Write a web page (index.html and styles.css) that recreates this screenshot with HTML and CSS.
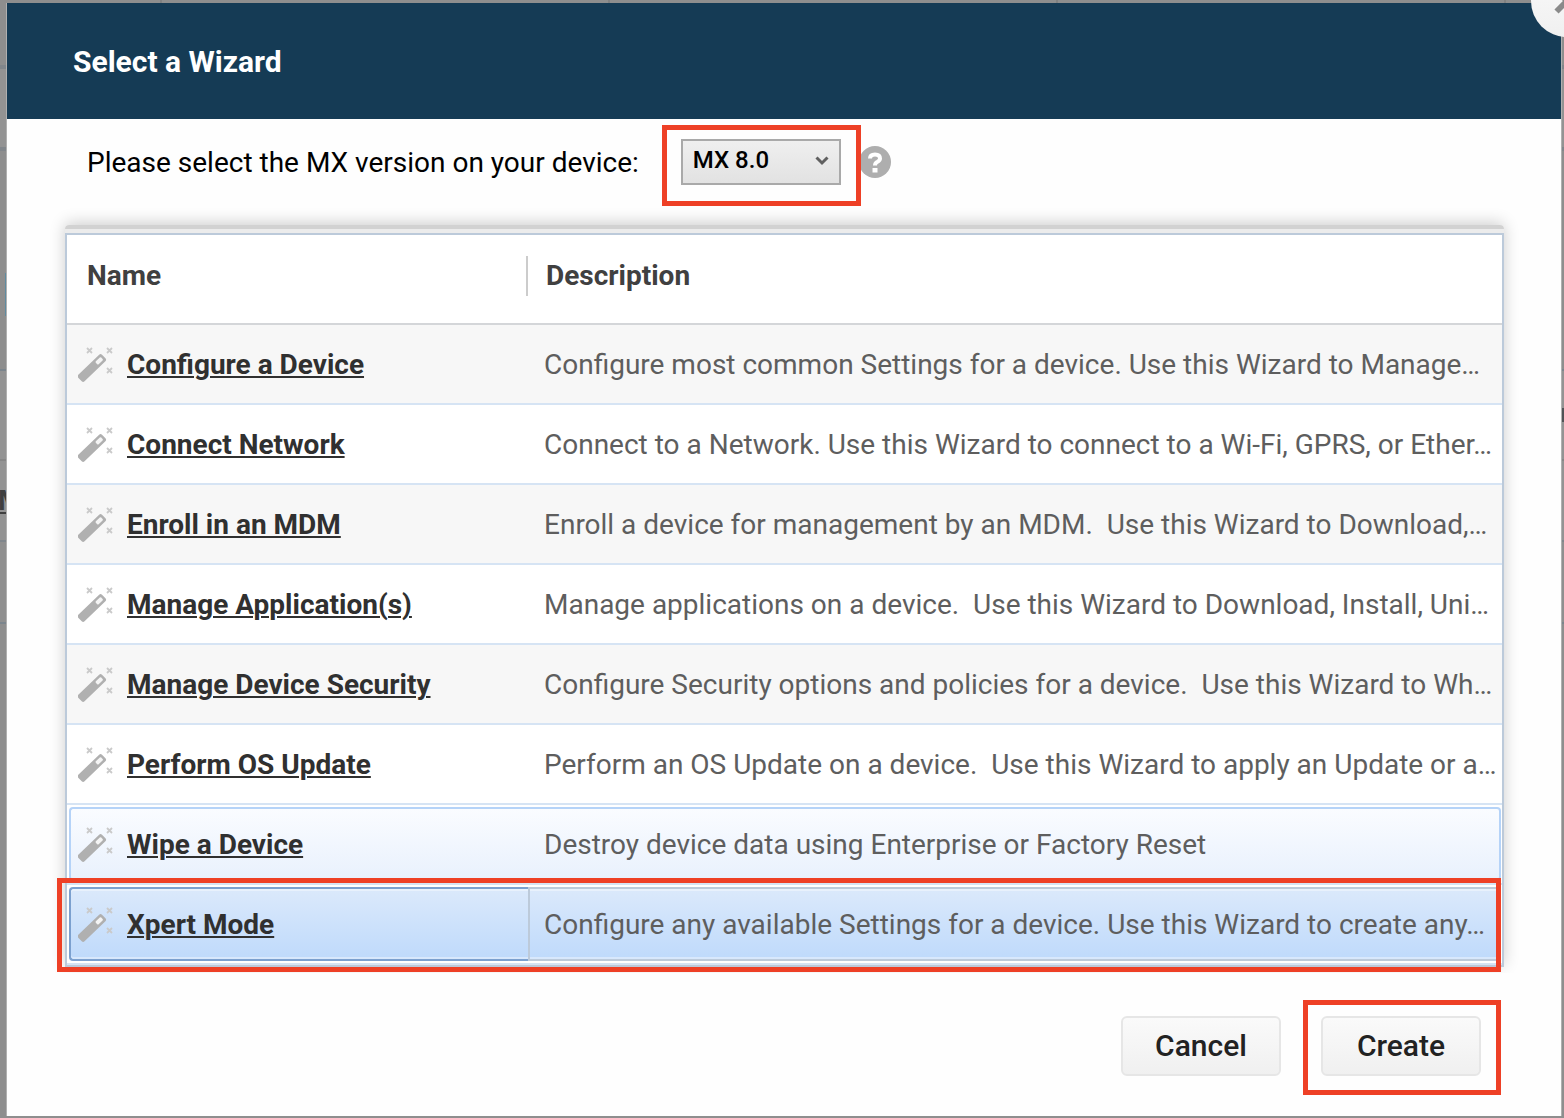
FILE: index.html
```html
<!DOCTYPE html>
<html lang="en">
<head>
<meta charset="utf-8">
<title>Select a Wizard</title>
<link rel="stylesheet" href="styles.css">
</head>
<body>
<svg class="sprite" aria-hidden="true">
  <symbol id="wand" viewBox="0 0 36 36">
    <g transform="translate(4.500 30) rotate(-44)">
      <rect x="-3.500" y="-4.500" width="33" height="9" rx="2" fill="#b0b0b0"/>
      <rect x="19.500" y="-2" width="7.500" height="4" rx="1" fill="#f4f4f4"/>
    </g>
    <path d="M9 1l5 5m0-5-5 5M29 1l5 5m0-5-5 5M29 21l5 5m0-5-5 5" stroke="#cacaca" stroke-width="1.800" fill="none"/>
  </symbol>
</svg>

<div class="backdrop" aria-hidden="true">
  <div class="band band-tabs"><i></i><i></i><i></i><i></i></div>
  <div class="band band-bar"></div>
  <div class="band band-tools"></div>
  <div class="band band-head"></div>
  <div class="band band-row"></div>
  <div class="band band-name">M</div>
  <div class="band band-last"></div>
</div>

<main class="dialog" role="dialog" aria-labelledby="title">
  <header class="dialog-header">
    <h1 id="title">Select a Wizard</h1>
    <button class="close" type="button" aria-label="Close">
      <svg viewBox="0 0 24 24" width="28" height="28"><path d="M3 3 21 21M21 3 3 21" stroke="#8a8a8a" stroke-width="5" fill="none"/></svg>
    </button>
  </header>

  <div class="version">
    <label for="mx">Please select the MX version on your device:</label>
    <span class="select marked">
      <select id="mx"><option>MX 8.0</option></select>
      <svg class="chevron" viewBox="0 0 14 10" width="14" height="10"><path d="M1.500 1.500 7 7 12.500 1.500" stroke="#606060" stroke-width="3" fill="none"/></svg>
    </span>
    <svg class="help" viewBox="0 0 32 32" width="32" height="32" role="img" aria-label="Help">
      <circle cx="16" cy="16" r="16" fill="#aeaeae"/>
      <path d="M11 12.500Q11 8.500 16 8.500Q21 8.500 21 12.500Q21 14.500 18.500 15.800Q16 17 16 19.500" stroke="#fff" stroke-width="4" fill="none"/>
      <path d="M13.500 22h5v4.500h-5z" fill="#fff"/>
    </svg>
  </div>

  <div class="grid">
    <table>
      <thead>
        <tr><th class="col-name" scope="col">Name</th><th scope="col">Description</th></tr>
      </thead>
      <tbody>
        <tr><td><div class="name"><svg class="wand"><use href="#wand"/></svg><a href="#configure">Configure a Device</a></div></td><td class="desc">Configure most common Settings for a device. Use this Wizard to Manage…</td></tr>
        <tr><td><div class="name"><svg class="wand"><use href="#wand"/></svg><a href="#network">Connect Network</a></div></td><td class="desc">Connect to a Network. Use this Wizard to connect to a Wi-Fi, GPRS, or Ether…</td></tr>
        <tr><td><div class="name"><svg class="wand"><use href="#wand"/></svg><a href="#enroll">Enroll in an MDM</a></div></td><td class="desc">Enroll a device for management by an MDM.&nbsp; Use this Wizard to Download,…</td></tr>
        <tr><td><div class="name"><svg class="wand"><use href="#wand"/></svg><a href="#apps">Manage Application(s)</a></div></td><td class="desc">Manage applications on a device.&nbsp; Use this Wizard to Download, Install, Uni…</td></tr>
        <tr><td><div class="name"><svg class="wand"><use href="#wand"/></svg><a href="#security">Manage Device Security</a></div></td><td class="desc">Configure Security options and policies for a device.&nbsp; Use this Wizard to Wh…</td></tr>
        <tr><td><div class="name"><svg class="wand"><use href="#wand"/></svg><a href="#update">Perform OS Update</a></div></td><td class="desc">Perform an OS Update on a device.&nbsp; Use this Wizard to apply an Update or a…</td></tr>
        <tr class="hovered"><td><div class="name"><svg class="wand"><use href="#wand"/></svg><a href="#wipe">Wipe a Device</a></div></td><td class="desc"><div>Destroy device data using Enterprise or Factory Reset</div></td></tr>
        <tr class="selected"><td><div class="name"><svg class="wand"><use href="#wand"/></svg><a href="#xpert">Xpert Mode</a></div></td><td class="desc"><div>Configure any available Settings for a device. Use this Wizard to create any…</div></td></tr>
      </tbody>
    </table>
  </div>

  <footer class="actions">
    <button class="btn" type="button">Cancel</button>
    <span class="marked create"><button class="btn" type="button">Create</button></span>
  </footer>
</main>
</body>
</html>
```
FILE: styles.css
```css
*, *::after { box-sizing: border-box; }

body {
  margin: 0;
  padding: 3px 3px 2px 7px;
  min-height: 100vh;
  overflow: hidden;
  position: relative;
  display: flex;
  background: #8e8e8e;
  font: 28px/36px Roboto, "Liberation Sans", sans-serif;
  color: #000;
}

.sprite { position: absolute; width: 0; height: 0; }

/* dimmed page behind the dialog */
.backdrop {
  position: absolute;
  inset: 0;
  display: flex;
  flex-direction: column;
}
.band { border-bottom: 2px solid #868686; }
.band-tabs {
  height: 69px;
  border-bottom: 4px solid #81868b;
  display: flex;
  gap: 446px;
  padding-left: 160px;
}
.band-tabs i { width: 2px; background: #818181; }
.band-bar { height: 82px; border-bottom: 4px solid #81868b; background: #939393; }
.band-tools {
  height: 220px;
  border-color: #7b858d;
  background: linear-gradient(#5f8ba0, #5f8ba0) 5px 122px / 30px 43px no-repeat;
}
.band-head {
  height: 90px;
  background: linear-gradient(#505356, #505356) right 37px / 3px 14px no-repeat #939393;
}
.band-row { height: 28px; border: 0; background: #939393; }
.band-name {
  height: 53px;
  border-color: #80868c;
  background: #939393;
  color: #3f3f3f;
  font-weight: 700;
  line-height: 24px;
  text-indent: -2px;
  text-decoration: underline;
}
.band-last { height: 82px; border-color: #7b858d; background: #8f8f8f; }

.dialog {
  position: relative;
  flex: 1;
  min-width: 0;
  display: flex;
  flex-direction: column;
  background: #fefefe;
  box-shadow: -1px 0 #b0b0b0, 1px 0 #b0b0b0;
}
.dialog-header {
  height: 116px;
  padding: 2px 66px 0;
  display: flex;
  align-items: center;
  background: #153b55;
  color: #fff;
}
h1 { margin: 0; font-size: 30px; font-weight: 700; }

.close {
  position: absolute;
  top: -38px;
  right: -42px;
  width: 72px;
  height: 72px;
  padding: 0;
  border: 0;
  border-radius: 50%;
  display: grid;
  place-items: center;
  background: linear-gradient(#fafafa, #f0f0f0);
}

.version {
  display: flex;
  align-items: center;
  padding: 20px 80px 0;
}
.version label { padding-top: 2px; }
.select { position: relative; display: flex; margin: 0 18px 0 42px; }
select {
  appearance: none;
  width: 160px;
  height: 46px;
  padding: 0 10px 4px;
  border: 2px solid #a9a9a9;
  border-radius: 0;
  background: linear-gradient(#efefef, #e2e2e2);
  color: #000;
  font: 500 24px/36px Roboto, "Liberation Sans", sans-serif;
}
.chevron { position: absolute; right: 12px; top: 17px; }

/* red call-out frames */
.marked { position: relative; }
.marked::after,
.grid::after {
  content: "";
  position: absolute;
  inset: -14px -20px -21px -19px;
  border: 5px solid #ee4026;
  pointer-events: none;
}

.grid {
  position: relative;
  margin: 40px 57px 0 58px;
  padding-top: 8px;
  border-radius: 4px 4px 0 0;
  background: linear-gradient(#d2d2d2 4px, #ececec 4px);
  box-shadow: 0 -2px 16px rgba(0, 0, 0, .2);
  clip-path: inset(-20px -20px -6px -20px);
}
.grid::after { inset: auto 3px -5px -8px; height: 94px; }

table {
  width: 100%;
  table-layout: fixed;
  border-collapse: separate;
  border-spacing: 0;
  border: 2px solid #bccada;
  background: #fff;
}
.col-name { width: 461px; }
th {
  height: 90px;
  padding: 0 18px 6px;
  border-bottom: 2px solid #d4d6d9;
  text-align: left;
  font-weight: 700;
  color: #404040;
}
.col-name {
  padding-left: 20px;
  background: linear-gradient(#ccc, #ccc) right 21px / 2px 40px no-repeat;
}
td { height: 80px; padding: 2px 0 0; border-bottom: 2px solid #d6e4f4; }
tbody tr:nth-child(odd) { background: #f7f7f7; }
.name {
  display: flex;
  align-items: center;
  gap: 13px;
  padding-left: 11px;
}
.wand { width: 36px; height: 36px; }
a {
  color: #303030;
  font-weight: 700;
  text-decoration: underline;
  text-decoration-thickness: 2px;
  text-underline-offset: 2px;
}
.desc {
  padding-left: 16px;
  overflow: hidden;
  white-space: nowrap;
  color: #5e5e5e;
}

.hovered td, .selected td { padding: 2px 0; background: #fff; }
.hovered td > div, .selected td > div {
  height: 74px;
  padding-top: 2px;
  display: flex;
  align-items: center;
}
.hovered .name, .selected .name { margin-left: 2px; padding-left: 7px; }
.hovered .desc > div { margin-right: 1px; padding-left: 16px; }
.selected .desc > div { margin-right: 1px; padding-left: 14px; }

.hovered td > div {
  border: 2px solid #b5d3f8;
  border-width: 2px 0;
  background: linear-gradient(#fafcff, #e9f1fd);
}
.hovered .name { border-left-width: 2px; border-radius: 4px 0 0 4px; }
.hovered .desc > div { border-right-width: 2px; border-radius: 0 4px 4px 0; }

.selected td > div {
  border: 2px solid #7ba0cf;
  border-right: 0;
  background: linear-gradient(#dbe9fb, #bfdafb);
  box-shadow: inset 0 2px #e8f1fc, inset 0 -2px #d8e8fc;
}
.selected .name { border-radius: 4px 0 0 4px; }
.selected .desc > div { border-color: #bccada; }

.actions {
  display: flex;
  justify-content: flex-end;
  gap: 40px;
  padding: 49px 80px 40px;
}
.btn {
  width: 160px;
  height: 60px;
  padding: 0;
  border: 2px solid #e6e6e6;
  border-radius: 6px;
  background: linear-gradient(#fafafa, #f0f0f0);
  color: #222;
  font: 500 30px/36px Roboto, "Liberation Sans", sans-serif;
}
.create { display: flex; }
.create::after { inset: -16px -20px -19px -18px; }
```
